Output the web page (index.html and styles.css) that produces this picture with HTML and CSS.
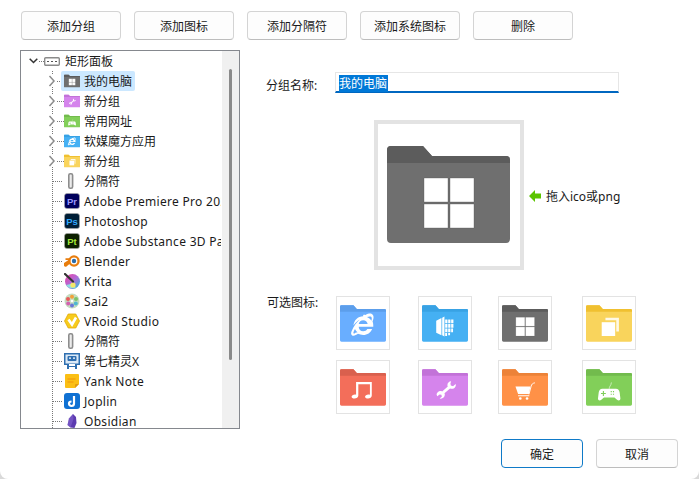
FILE: index.html
```html
<!DOCTYPE html>
<html lang="zh-CN">
<head>
    <meta charset="UTF-8">
    <title>分组设置</title>
    <link rel="stylesheet" href="styles.css">
</head>
<body>
    <svg class="defs" width="0" height="0">
        <symbol id="folder" viewBox="0 0 123 97">
            <path fill="currentColor" d="M4 0H36L45 10H119Q123 10 123 14V93Q123 97 119 97H4Q0 97 0 93V4Q0 0 4 0Z"/>
            <path class="folder-tab" d="M4 0H36L45 10H119Q123 10 123 14V17H0V4Q0 0 4 0Z"/>
        </symbol>
        <symbol id="panes" viewBox="0 0 123 97">
            <path fill="#fff" stroke="#555" stroke-opacity=".35" d="M37 32h24v24H37zM63 32h24v24H63zM37 58h24v24H37zM63 58h24v24H63z"/>
        </symbol>
        <symbol id="ie" viewBox="0 0 123 97">
            <path fill="#fff" d="M62 29c-14 0-25 11-26 25 4-6 10-12 17-16-8 7-16 17-22 31-3 8 0 12 5 12 4 0 8-2 12-5 4 2 9 3 14 3 11 0 20-6 24-16H73c-2 4-6 6-11 6-7 0-12-5-12-12h39c0-5 0-10-2-14 4-9 4-17-2-20-4-2-10-1-17 3-2-1-4-1-6 0zm19 1c4 0 5 5 3 11-3-5-7-8-12-10 4-1 7-2 9-1zM50 50c1-6 6-10 12-10s11 4 12 10zM41 73c-3 4-6 3-5-1 1-3 2-6 4-9 2 4 4 7 7 9-2 1-4 1-6 1z"/>
        </symbol>
        <symbol id="cube" viewBox="0 0 123 97">
            <path fill="#fff" d="M38 41l14-7v46l-14-7zM54 33l6-3v53l-6-3zM62 38h6v10h-6zM70 38h6v10h-6zM78 38h6v10h-6zM62 50h6v10h-6zM70 50h6v10h-6zM78 50h6v10h-6zM62 62h6v10h-6zM70 62h6v10h-6zM78 62h5v10h-5zM62 74h5v8h-5zM70 74h5v6h-5z"/>
        </symbol>
        <symbol id="copies" viewBox="0 0 123 97">
            <path fill="#fff" d="M42 45h36v37H42z"/>
            <path fill="#fff" opacity=".85" d="M52 33h36v37h-7V40H52z"/>
        </symbol>
        <symbol id="music" viewBox="0 0 123 97">
            <path fill="#fff" d="M43 34h42v36c0 5-5 8-10 8s-8-2-8-5 4-6 9-6c2 0 3 0 4 1V40H49v30c0 5-5 8-10 8s-8-2-8-5 4-6 9-6c1 0 2 0 3 1z"/>
        </symbol>
        <symbol id="wrench" viewBox="0 0 123 97">
            <path fill="#fff" d="M78 32c-6 0-10 5-10 10 0 2 0 3 1 4L54 59c-2-1-3-1-5-1-5 0-10 5-10 10l2 4 6-5 5 1 1 5-6 5c7 2 14-3 14-10 0-1 0-3-1-4l15-13c2 1 3 1 5 1 7 0 12-7 10-13l-7 6-6-2-1-5z"/>
        </symbol>
        <symbol id="cart" viewBox="0 0 123 97">
            <path fill="#fff" d="M36 46h40l-4 20H43zM43 69h30v3H43z"/>
            <path fill="none" stroke="#fff" stroke-width="2.500" d="M72 67l6-22c1-5 4-8 10-9"/>
            <circle fill="#fff" cx="49" cy="78" r="3.500"/>
            <circle fill="#fff" cx="67" cy="78" r="3.500"/>
        </symbol>
        <symbol id="pad" viewBox="0 0 123 97">
            <path fill="none" stroke="#fff" stroke-width="1.500" d="M62 52c0-7 5-8 6-17"/>
            <path fill="#fff" d="M44 52h36c6 0 9 4 10 10l2 16c0 5-5 7-9 3l-7-6H48l-7 6c-4 4-9 2-9-3l2-16c1-6 4-10 10-10z"/>
            <path fill="#7fce5a" d="M45 58h3v5h5v3h-5v5h-3v-5h-5v-3h5zM66 58h3v3h-3zM72 58h3v3h-3zM66 65h3v3h-3zM72 65h3v3h-3z"/>
        </symbol>
        <symbol id="chev" viewBox="0 0 8 12">
            <path fill="none" stroke="currentColor" stroke-width="1.500" d="M1.500 1l4.500 5-4.500 5"/>
        </symbol>
        <symbol id="bar" viewBox="0 0 16 16">
            <rect x="4.800" y="0.800" width="3.800" height="14.400" rx="1.500" fill="#ececec" stroke="#8d8d8d" stroke-width="1.600"/>
        </symbol>
    </svg>

    <main class="dialog">
        <div class="toolbar">
            <button class="btn">添加分组</button>
            <button class="btn">添加图标</button>
            <button class="btn">添加分隔符</button>
            <button class="btn">添加系统图标</button>
            <button class="btn">删除</button>
        </div>

        <div class="content">
            <div class="tree">
                <div class="tree-view">
                    <div class="row root">
                        <svg class="caret" width="9" height="6" viewBox="0 0 9 6"><path fill="none" stroke="#333" stroke-width="1.500" d="M.7.7l3.800 3.800L8.300.7"/></svg>
                        <svg class="panel" width="16" height="9" viewBox="0 0 16 9"><rect x=".7" y=".7" width="14.600" height="7.600" rx="1" fill="#fff" stroke="#8a8a8a" stroke-width="1.400"/><path stroke="#555" stroke-dasharray="2 2" d="M3 4.500h10"/></svg>
                        <span class="label">矩形面板</span>
                    </div>
                    <ul class="nodes">
                        <li class="row group">
                            <svg class="chev"><use href="#chev"/></svg>
                            <span class="item selected">
                                <svg class="ico col-grey"><use href="#folder"/><use href="#panes"/></svg>
                                <span class="label">我的电脑</span>
                            </span>
                        </li>
                        <li class="row group">
                            <svg class="chev"><use href="#chev"/></svg>
                            <span class="item">
                                <svg class="ico col-purple"><use href="#folder"/><use href="#wrench"/></svg>
                                <span class="label">新分组</span>
                            </span>
                        </li>
                        <li class="row group">
                            <svg class="chev"><use href="#chev"/></svg>
                            <span class="item">
                                <svg class="ico col-green"><use href="#folder"/><use href="#pad"/></svg>
                                <span class="label">常用网址</span>
                            </span>
                        </li>
                        <li class="row group">
                            <svg class="chev"><use href="#chev"/></svg>
                            <span class="item">
                                <svg class="ico col-sky"><use href="#folder"/><use href="#ie"/></svg>
                                <span class="label">软媒魔方应用</span>
                            </span>
                        </li>
                        <li class="row group">
                            <svg class="chev"><use href="#chev"/></svg>
                            <span class="item">
                                <svg class="ico col-yellow"><use href="#folder"/><use href="#copies"/></svg>
                                <span class="label">新分组</span>
                            </span>
                        </li>
                        <li class="row leaf">
                            <span class="item">
                                <svg class="ico"><use href="#bar"/></svg>
                                <span class="label">分隔符</span>
                            </span>
                        </li>
                        <li class="row leaf">
                            <span class="item">
                                <svg class="ico" viewBox="0 0 16 16"><rect class="adobe-box" x=".5" y=".5" width="15" height="15" rx="2.500" fill="#00005b"/><text class="adobe" x="8" y="11.500" fill="#9999ff">Pr</text></svg>
                                <span class="label latin">Adobe Premiere Pro 2023</span>
                            </span>
                        </li>
                        <li class="row leaf">
                            <span class="item">
                                <svg class="ico" viewBox="0 0 16 16"><rect class="adobe-box" x=".5" y=".5" width="15" height="15" rx="2.500" fill="#001e36"/><text class="adobe" x="8" y="11.500" fill="#31a8ff">Ps</text></svg>
                                <span class="label latin">Photoshop</span>
                            </span>
                        </li>
                        <li class="row leaf">
                            <span class="item">
                                <svg class="ico" viewBox="0 0 16 16"><rect class="adobe-box" x=".5" y=".5" width="15" height="15" rx="2.500" fill="#0c2000"/><text class="adobe" x="8" y="11.500" fill="#a5e83a">Pt</text></svg>
                                <span class="label latin">Adobe Substance 3D Painter</span>
                            </span>
                        </li>
                        <li class="row leaf">
                            <span class="item">
                                <svg class="ico" viewBox="0 0 16 16">
                                    <path fill="#e87d0d" d="M0 10l4.500-3H1.500V5.300H7L9 4l3 1-3 7-3-1.500-3.500 3c-1.500 1-3.500-.5-2.500-3.500z"/>
                                    <circle cx="10" cy="8" r="5.700" fill="#e87d0d"/>
                                    <circle cx="10" cy="8" r="3.400" fill="#fff"/>
                                    <circle cx="10" cy="8" r="2.200" fill="#2a6cab"/>
                                </svg>
                                <span class="label latin">Blender</span>
                            </span>
                        </li>
                        <li class="row leaf">
                            <span class="item">
                                <svg class="ico" viewBox="0 0 16 16">
                                    <defs><linearGradient id="krita" x1="0" y1="0" x2="1" y2="1"><stop offset="0" stop-color="#f03fa0"/><stop offset=".5" stop-color="#b06ad8"/><stop offset="1" stop-color="#22c8d8"/></linearGradient></defs>
                                    <circle cx="8.500" cy="8.500" r="7.500" fill="url(#krita)"/>
                                    <path fill="#8fe0e0" d="M2 12c2 3.500 7 4 10 2.500l-3-4z"/>
                                    <circle cx="9" cy="12" r="2.600" fill="#f4e66a"/>
                                    <path stroke="#333" stroke-width="2.200" stroke-linecap="round" d="M1 1l8 7.500"/>
                                </svg>
                                <span class="label latin">Krita</span>
                            </span>
                        </li>
                        <li class="row leaf">
                            <span class="item">
                                <svg class="ico" viewBox="0 0 16 16">
                                    <circle cx="8" cy="8" r="7.500" fill="#c5dcc0"/>
                                    <circle cx="8" cy="3.800" r="2" fill="#f2a03a"/>
                                    <circle cx="12" cy="6" r="2" fill="#7cc36a"/>
                                    <circle cx="11.800" cy="10.500" r="2" fill="#4fb8d0"/>
                                    <circle cx="8" cy="12.400" r="2" fill="#6a76d8"/>
                                    <circle cx="4.200" cy="10.500" r="2" fill="#d45fb0"/>
                                    <circle cx="4" cy="6" r="2" fill="#e85a5a"/>
                                    <circle cx="8" cy="8" r="1.300" fill="#fff"/>
                                </svg>
                                <span class="label latin">Sai2</span>
                            </span>
                        </li>
                        <li class="row leaf">
                            <span class="item">
                                <svg class="ico" viewBox="0 0 16 16"><path fill="#f7cb1c" stroke="#e2a90c" stroke-width=".8" d="M4.200 1h7.600l3.700 7-3.700 7H4.200L.5 8z"/><path fill="none" stroke="#fff" stroke-width="2.600" d="M4.500 6.500L8 11.500l4-7"/></svg>
                                <span class="label latin">VRoid Studio</span>
                            </span>
                        </li>
                        <li class="row leaf">
                            <span class="item">
                                <svg class="ico"><use href="#bar"/></svg>
                                <span class="label">分隔符</span>
                            </span>
                        </li>
                        <li class="row leaf">
                            <span class="item">
                                <svg class="ico" viewBox="0 0 16 16"><path fill="#2f6fb0" d="M0 0h16v12h-3v4h-2v-2H5v2H3v-4H0z"/><rect x="1.500" y="1.500" width="13" height="9" fill="#dbe9f6"/><rect x="3.500" y="3" width="9" height="5" rx="1" fill="#2f6fb0"/><path fill="#fff" d="M5 4.500h2v1.200H5zM9 4.500h2v1.200H9z"/><rect x="5" y="11" width="6" height="2" fill="#fff"/></svg>
                                <span class="label">第七精灵X</span>
                            </span>
                        </li>
                        <li class="row leaf">
                            <span class="item">
                                <svg class="ico" viewBox="0 0 16 16"><path fill="#fbbf14" d="M2 1h12q1 0 1 1v9l-4 4H2q-1 0-1-1V2q0-1 1-1z"/><path fill="#e09a10" d="M15 11h-3q-1 0-1 1v3z"/><path stroke="#f0930a" d="M3.500 6h8M3.500 9h6"/></svg>
                                <span class="label latin">Yank Note</span>
                            </span>
                        </li>
                        <li class="row leaf">
                            <span class="item">
                                <svg class="ico" viewBox="0 0 16 16"><rect width="16" height="16" rx="3" fill="#1071d3"/><path fill="none" stroke="#fff" stroke-width="2.200" d="M10 3v7.500c0 1.500-1 2.500-2.500 2.500S5 12 5 10.500 6 8.500 7.500 8.500"/></svg>
                                <span class="label latin">Joplin</span>
                            </span>
                        </li>
                        <li class="row leaf">
                            <span class="item">
                                <svg class="ico" viewBox="0 0 16 16"><path fill="#5c3bb0" d="M9 1l3 3 .5 6-2 5-4-.5-3-2.500 1.500-6.500z"/><path fill="#8a6bd6" d="M9 1l.5 5-3 8.500-3-2.500 1.500-6.500z" opacity=".5"/></svg>
                                <span class="label latin">Obsidian</span>
                            </span>
                        </li>
                    </ul>
                </div>
                <div class="scrollbar"><div class="thumb"></div></div>
            </div>

            <div class="editor">
                <div class="name-row">
                    <span class="field-label">分组名称:</span>
                    <div class="name-input"><span class="sel">我的电脑</span></div>
                </div>

                <div class="preview-row">
                    <div class="preview">
                        <svg class="preview-icon col-grey"><use href="#folder"/><use href="#panes"/></svg>
                    </div>
                    <div class="drop-hint">
                        <svg width="12" height="12" viewBox="0 0 12 12"><path fill="#5cc400" d="M6 0v3.500h6v5H6V12L0 6z"/></svg>
                        <span>拖入ico或png</span>
                    </div>
                </div>

                <div class="icons-row">
                    <span class="field-label">可选图标:</span>
                    <div class="icon-grid">
                        <div class="cell"><svg class="col-blue"><use href="#folder"/><use href="#ie"/></svg></div>
                        <div class="cell"><svg class="col-sky"><use href="#folder"/><use href="#cube"/></svg></div>
                        <div class="cell"><svg class="col-grey"><use href="#folder"/><use href="#panes"/></svg></div>
                        <div class="cell"><svg class="col-yellow"><use href="#folder"/><use href="#copies"/></svg></div>
                        <div class="cell"><svg class="col-red"><use href="#folder"/><use href="#music"/></svg></div>
                        <div class="cell"><svg class="col-purple"><use href="#folder"/><use href="#wrench"/></svg></div>
                        <div class="cell"><svg class="col-orange"><use href="#folder"/><use href="#cart"/></svg></div>
                        <div class="cell"><svg class="col-green"><use href="#folder"/><use href="#pad"/></svg></div>
                    </div>
                </div>
            </div>
        </div>

        <div class="actions">
            <button class="btn small primary">确定</button>
            <button class="btn small">取消</button>
        </div>
    </main>
</body>
</html>
```

FILE: styles.css
```css
* {
    box-sizing: border-box;
}
html, body {
    height: 100%;
}
body {
    margin: 0;
    background-color: #d9d9d9;
    color: #1a1a1a;
    font-family: "Noto Sans", "Noto Sans CJK SC", sans-serif;
    font-size: 12px;
    overflow: hidden;
}
.defs {
    display: block;
    height: 0;
}
.dialog {
    height: 479px;
    padding: 11px 21px 12px 20px;
    background: #fff;
    border-radius: 0 0 8px 8px;
    display: flex;
    flex-direction: column;
}

/* buttons */
.toolbar {
    display: flex;
    gap: 13px;
    margin-left: 1px;
    height: 29px;
}
.btn {
    width: 100px;
    height: 29px;
    padding: 0;
    background-color: #fdfdfd;
    border: 1px solid #d4d4d4;
    border-bottom-color: #bdbdbd;
    border-radius: 4px;
    color: #1a1a1a;
    font-family: inherit;
    font-size: 12px;
}
.btn.small {
    width: 82px;
}
.btn.primary {
    border-color: #0f7ac8;
}

/* left tree */
.content {
    display: flex;
    margin-top: 10px;
    height: 379px;
}
.tree {
    width: 220px;
    flex: none;
    display: flex;
    border: 1px solid #85888e;
    overflow: hidden;
}
.tree-view {
    width: 200px;
    flex: none;
    overflow: hidden;
}
.nodes {
    list-style: none;
    margin: 0;
    padding: 0;
    background: repeating-linear-gradient(to bottom, #777 0 1px, transparent 1px 2px) 31px 0 / 1px 100% no-repeat;
}
.row {
    height: 20px;
    display: flex;
    align-items: center;
    white-space: nowrap;
}
.root {
    padding-left: 8px;
    background: repeating-linear-gradient(to right, #777 0 1px, transparent 1px 2px) 18px 50% / 6px 1px no-repeat;
}
.caret {
    flex: none;
}
.panel {
    flex: none;
    margin-left: 6px;
}
.root .label {
    margin-left: 5px;
}
.group {
    padding-left: 27px;
    background: repeating-linear-gradient(to right, #777 0 1px, transparent 1px 2px) 36px 50% / 7px 1px no-repeat;
}
.leaf {
    padding-left: 40px;
    background: repeating-linear-gradient(to right, #777 0 1px, transparent 1px 2px) 32px 50% / 10px 1px no-repeat;
}
.chev {
    width: 8px;
    height: 12px;
    margin-right: 5px;
    flex: none;
    color: #8c8c8c;
    background: #fff;
}
.item {
    height: 20px;
    display: flex;
    align-items: center;
    padding: 0 3px;
    border-radius: 2px;
}
.item.selected {
    background-color: #cce8ff;
}
.ico {
    width: 16px;
    height: 16px;
    flex: none;
    margin-right: 4px;
}
.latin {
    letter-spacing: .3px;
}
.adobe-box {
    stroke: #a8a8a8;
    stroke-opacity: .6;
}
.adobe {
    font-family: "Liberation Sans", sans-serif;
    font-size: 9.500px;
    font-weight: 700;
    text-anchor: middle;
}
.folder-tab {
    fill: var(--tab);
}

/* scrollbar */
.scrollbar {
    width: 17px;
    margin-left: auto;
    background-color: #f0f0f0;
    padding: 18px 0 0 7px;
}
.thumb {
    width: 3px;
    height: 291px;
    background-color: #8a8a8a;
    border-radius: 2px;
}

/* right side */
.editor {
    flex: 1;
    padding: 22px 0 0 27px;
}
.name-row {
    display: flex;
    align-items: center;
    height: 20px;
}
.name-row .field-label {
    margin: 5px 0 0 -1px;
    width: 69px;
}
.field-label {
    width: 68px;
    flex: none;
}
.name-input {
    width: 284px;
    height: 21px;
    padding: 2px 3px 0;
    border: 1px solid #e6e6e6;
    border-bottom: 2px solid #0067c0;
}
.sel {
    display: block;
    width: 49px;
    height: 17px;
    line-height: 17px;
    background-color: #0078d7;
    color: #fff;
}
.preview-row {
    display: flex;
    align-items: center;
    margin: 28px 0 0 107px;
}
.preview {
    width: 150px;
    height: 150px;
    border: 4px solid #e3e3e3;
    display: flex;
    align-items: center;
    justify-content: center;
}
.preview-icon {
    width: 123px;
    height: 97px;
    margin: -2px 1px 0 0;
}
.drop-hint {
    display: flex;
    align-items: center;
    gap: 5px;
    margin: 2px 0 0 5px;
}
.icons-row {
    display: flex;
    margin-top: 26px;
}
.icons-row .field-label {
    width: 69px;
    line-height: 14px;
}
.icon-grid {
    display: grid;
    grid-template-columns: 82px 80px 84px 54px;
    grid-auto-rows: 54px;
    row-gap: 10px;
}
.cell {
    width: 54px;
    height: 54px;
    border: 1px solid #e3e3e3;
    padding: 8px 3px 0;
}
.cell svg {
    display: block;
    width: 46px;
    height: 37px;
}
.col-grey { color: #6f6f6f; --tab: #5c5c5c; }
.col-purple { color: #d584ec; --tab: #c272d8; }
.col-green { color: #82cf59; --tab: #72bb4d; }
.col-sky { color: #45b0f3; --tab: #38a2e4; }
.col-blue { color: #69aeff; --tab: #5c9eeb; }
.col-yellow { color: #f9d45c; --tab: #f0c030; }
.col-red { color: #f36e5a; --tab: #d9604e; }
.col-orange { color: #ff9147; --tab: #ec8238; }

/* bottom */
.actions {
    display: flex;
    justify-content: flex-end;
    gap: 13px;
    margin-top: 10px;
}
```
